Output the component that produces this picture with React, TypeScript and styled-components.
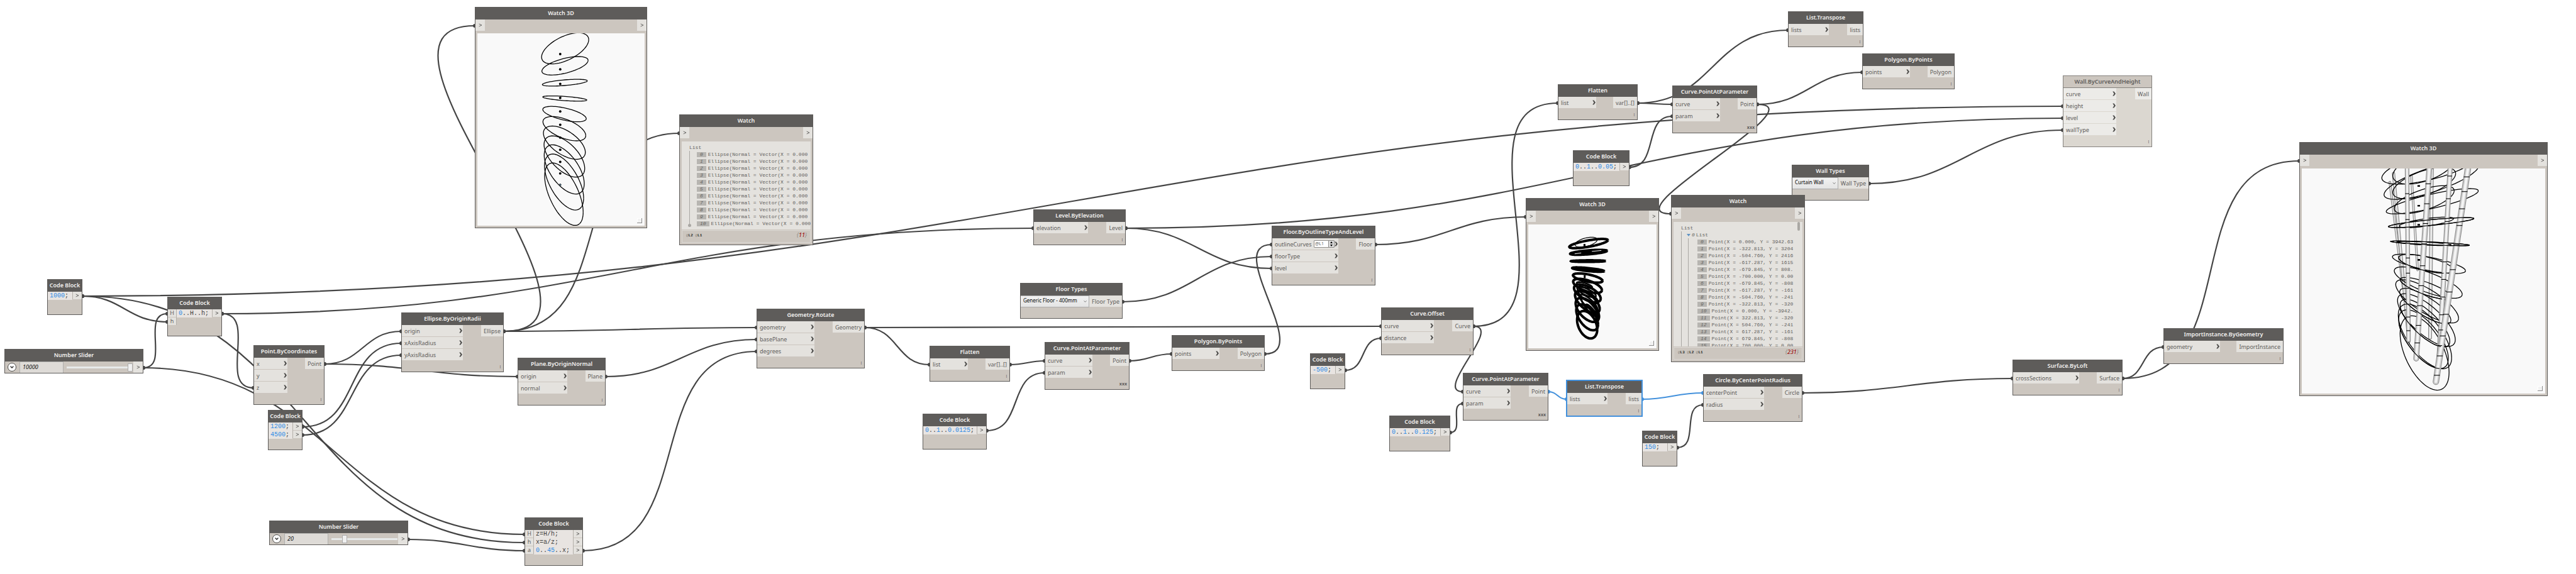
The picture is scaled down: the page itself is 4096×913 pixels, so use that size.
import React from "react";
import styled, { createGlobalStyle, css } from "styled-components";
import { ChevronDown } from "lucide-react";

/* ---------- theme ---------- */

const color = {
  ink: "#5e5c5a",
  body: "#ccc6bf",
  port: "#e4e2de",
  code: "#e8e4e1",
  rule: "#b3afa9",
  wire: "#444444",
  blue: "#4391dc",
  number: "#2e8be6",
};

const ui = `"Noto Sans", "Open Sans", sans-serif`;
const mono = `"Liberation Mono", monospace`;

/* The workspace is shown zoomed out; node data is in unzoomed units. */
const ZOOM = 0.7338;
const z = (v: number) => Math.round(v * ZOOM);

/* ---------- data ---------- */

type Kind = "function" | "code" | "slider" | "dropdown" | "watch" | "watch3d";

interface NodeData {
  id: string;
  kind: Kind;
  title: string;
  x: number;
  y: number;
  w: number;
  h?: number;
  ins?: string[];
  inW?: number;
  out?: string;
  lacing?: string;
  code?: string[];
  value?: string;
  percent?: number;
  tone?: "selected" | "frozen";
  level?: boolean;
  view?: "ellipses" | "rings" | "tower";
  list?: "ellipses" | "points";
}

const nodes: NodeData[] = [
  { id: "height", kind: "code", title: "Code Block", x: 102, y: 605, w: 76, code: ["1000;"] },
  { id: "range", kind: "code", title: "Code Block", x: 362, y: 643, w: 119, ins: ["H", "h"], code: ["0..H..h;"] },
  { id: "total", kind: "slider", title: "Number Slider", x: 10, y: 757, w: 301, value: "10000", percent: 100 },
  { id: "point", kind: "function", title: "Point.ByCoordinates", x: 549, y: 748, w: 154, ins: ["x", "y", "z"], inW: 73, out: "Point" },
  { id: "radii", kind: "code", title: "Code Block", x: 580, y: 888, w: 76, code: ["1200;", "4500;"] },
  { id: "ellipse", kind: "function", title: "Ellipse.ByOriginRadii", x: 870, y: 677, w: 222, ins: ["origin", "xAxisRadius", "yAxisRadius"], inW: 134, out: "Ellipse" },
  { id: "plane", kind: "function", title: "Plane.ByOriginNormal", x: 1122, y: 776, w: 190, ins: ["origin", "normal"], inW: 107, out: "Plane" },
  { id: "angle", kind: "slider", title: "Number Slider", x: 583, y: 1128, w: 301, value: "20", percent: 18 },
  { id: "steps", kind: "code", title: "Code Block", x: 1136, y: 1122, w: 127, ins: ["H", "h", "a"], code: ["z=H/h;", "x=a/z;", "0..45..x;"] },
  { id: "view1", kind: "watch3d", title: "Watch 3D", x: 1029, y: 15, w: 373, h: 480, view: "ellipses" },
  { id: "watch1", kind: "watch", title: "Watch", x: 1472, y: 248, w: 290, h: 284, list: "ellipses" },
  { id: "rotate", kind: "function", title: "Geometry.Rotate", x: 1640, y: 669, w: 234, ins: ["geometry", "basePlane", "degrees"], inW: 125, out: "Geometry" },
  { id: "flatten1", kind: "function", title: "Flatten", x: 2014, y: 749, w: 174, ins: ["list"], inW: 83, out: "var[]..[]" },
  { id: "param1", kind: "function", title: "Curve.PointAtParameter", x: 2263, y: 742, w: 185, ins: ["curve", "param"], inW: 104, out: "Point", lacing: "xxx" },
  { id: "code1", kind: "code", title: "Code Block", x: 1999, y: 897, w: 139, code: ["0..1..0.0125;"] },
  { id: "level", kind: "function", title: "Level.ByElevation", x: 2239, y: 454, w: 200, ins: ["elevation"], inW: 119, out: "Level" },
  { id: "floorTypes", kind: "dropdown", title: "Floor Types", x: 2211, y: 613, w: 222, value: "Generic Floor - 400mm", out: "Floor Type" },
  { id: "floor", kind: "function", title: "Floor.ByOutlineTypeAndLevel", x: 2755, y: 489, w: 226, ins: ["outlineCurves", "floorType", "level"], inW: 145, out: "Floor", level: true },
  { id: "polygon1", kind: "function", title: "Polygon.ByPoints", x: 2539, y: 727, w: 201, ins: ["points"], inW: 103, out: "Polygon" },
  { id: "code2", kind: "code", title: "Code Block", x: 2839, y: 766, w: 76, code: ["-500;"] },
  { id: "offset", kind: "function", title: "Curve.Offset", x: 2993, y: 667, w: 200, ins: ["curve", "distance"], inW: 115, out: "Curve" },
  { id: "param2", kind: "function", title: "Curve.PointAtParameter", x: 3170, y: 808, w: 185, ins: ["curve", "param"], inW: 104, out: "Point", lacing: "xxx" },
  { id: "code3", kind: "code", title: "Code Block", x: 3011, y: 901, w: 131, code: ["0..1..0.125;"] },
  { id: "transpose1", kind: "function", title: "List.Transpose", x: 3395, y: 825, w: 163, ins: ["lists"], inW: 89, out: "lists", tone: "selected" },
  { id: "circle", kind: "function", title: "Circle.ByCenterPointRadius", x: 3690, y: 811, w: 216, ins: ["centerPoint", "radius"], inW: 132, out: "Circle" },
  { id: "code4", kind: "code", title: "Code Block", x: 3558, y: 933, w: 76, code: ["150;"] },
  { id: "view2", kind: "watch3d", title: "Watch 3D", x: 3306, y: 429, w: 289, h: 331, view: "rings" },
  { id: "wallTypes", kind: "dropdown", title: "Wall Types", x: 3883, y: 357, w: 167, value: "Curtain Wall", out: "Wall Type" },
  { id: "watch2", kind: "watch", title: "Watch", x: 3621, y: 422, w: 290, h: 363, list: "points" },
  { id: "transpose2", kind: "function", title: "List.Transpose", x: 3875, y: 24, w: 163, ins: ["lists"], inW: 89, out: "lists" },
  { id: "flatten2", kind: "function", title: "Flatten", x: 3375, y: 182, w: 174, ins: ["list"], inW: 83, out: "var[]..[]" },
  { id: "param3", kind: "function", title: "Curve.PointAtParameter", x: 3623, y: 185, w: 185, ins: ["curve", "param"], inW: 104, out: "Point", lacing: "xxx" },
  { id: "code5", kind: "code", title: "Code Block", x: 3408, y: 326, w: 123, code: ["0..1..0.05;"] },
  { id: "polygon2", kind: "function", title: "Polygon.ByPoints", x: 4035, y: 116, w: 201, ins: ["points"], inW: 103, out: "Polygon" },
  { id: "wall", kind: "function", title: "Wall.ByCurveAndHeight", x: 4470, y: 164, w: 193, ins: ["curve", "height", "level", "wallType"], inW: 116, out: "Wall", tone: "frozen" },
  { id: "loft", kind: "function", title: "Surface.ByLoft", x: 4361, y: 780, w: 238, ins: ["crossSections"], inW: 144, out: "Surface" },
  { id: "import", kind: "function", title: "ImportInstance.ByGeometry", x: 4688, y: 711, w: 260, ins: ["geometry"], inW: 122, out: "ImportInstance" },
  { id: "view3", kind: "watch3d", title: "Watch 3D", x: 4982, y: 308, w: 538, h: 551, view: "tower" },
];

type Wire = [from: string, outIndex: number, to: string, inIndex: number, selected?: boolean];

const wires: Wire[] = [
  ["height", 0, "wall", 1],
  ["height", 0, "range", 1],
  ["height", 0, "steps", 1],
  ["range", 0, "level", 0],
  ["range", 0, "point", 2],
  ["total", 0, "range", 0],
  ["total", 0, "steps", 0],
  ["radii", 0, "ellipse", 1],
  ["radii", 1, "ellipse", 2],
  ["point", 0, "ellipse", 0],
  ["point", 0, "plane", 0],
  ["ellipse", 0, "view1", 0],
  ["ellipse", 0, "watch1", 0],
  ["ellipse", 0, "rotate", 0],
  ["plane", 0, "rotate", 1],
  ["steps", 2, "rotate", 2],
  ["angle", 0, "steps", 2],
  ["rotate", 0, "flatten1", 0],
  ["rotate", 0, "offset", 0],
  ["flatten1", 0, "param1", 0],
  ["code1", 0, "param1", 1],
  ["param1", 0, "polygon1", 0],
  ["polygon1", 0, "floor", 0],
  ["level", 0, "floor", 2],
  ["level", 0, "wall", 2],
  ["floorTypes", 0, "floor", 1],
  ["floor", 0, "view2", 0],
  ["code2", 0, "offset", 1],
  ["offset", 0, "flatten2", 0],
  ["offset", 0, "param2", 0],
  ["code3", 0, "param2", 1],
  ["param2", 0, "transpose1", 0, true],
  ["transpose1", 0, "circle", 0, true],
  ["code4", 0, "circle", 1],
  ["circle", 0, "loft", 0],
  ["loft", 0, "import", 0],
  ["loft", 0, "view3", 0],
  ["flatten2", 0, "param3", 0],
  ["flatten2", 0, "transpose2", 0],
  ["code5", 0, "param3", 1],
  ["param3", 0, "polygon2", 0],
  ["param3", 0, "watch2", 0],
  ["wallTypes", 0, "wall", 3],
];

/* ---------- wires ---------- */

const byId = Object.fromEntries(nodes.map((n) => [n.id, n]));

function portY(n: NodeData, index: number) {
  return n.kind === "code" ? z(n.y) + 27 + index * 13 : z(n.y) + 30 + index * 19;
}

const WireLayer = styled.svg`
  position: absolute;
  inset: 0;
  width: 100%;
  height: 100%;
  overflow: visible;
`;

function Wires() {
  return (
    <WireLayer aria-hidden="true">
      {wires.map(([from, out, to, into, selected], i) => {
        const a = byId[from];
        const b = byId[to];
        const x0 = z(a.x + a.w);
        const y0 = portY(a, out);
        const x1 = z(b.x);
        const y1 = portY(b, into);
        const reach = 0.45 * Math.hypot(x1 - x0, y1 - y0);
        const stroke = selected ? color.blue : color.wire;
        return (
          <g key={i} stroke={stroke} fill={stroke}>
            <path
              d={`M${x0} ${y0}C${x0 + reach} ${y0} ${x1 - reach} ${y1} ${x1} ${y1}`}
              fill="none"
              strokeWidth="2.2"
            />
            <circle cx={x0} cy={y0} r="3" stroke="none" />
            <circle cx={x1} cy={y1} r="3" stroke="none" />
          </g>
        );
      })}
    </WireLayer>
  );
}

/* ---------- node frame ---------- */

const GlobalStyle = createGlobalStyle`
  body { margin: 0; background: #fff; }
  *, *::before, *::after { box-sizing: border-box; }
  button, input, select { font: inherit; color: inherit; margin: 0; padding: 0; border: 0; border-radius: 0; background: none; }
`;

const Workspace = styled.main`
  position: relative;
  width: 100%;
  min-height: 100vh;
  overflow: hidden;
  background: #fff;
  font: 9px/18px ${ui};
  color: ${color.ink};
`;

const Frame = styled.section<{ $x: number; $y: number; $w: number; $h?: number; $tone?: string }>`
  position: absolute;
  left: ${(p) => p.$x}px;
  top: ${(p) => p.$y}px;
  width: ${(p) => p.$w}px;
  ${(p) => p.$h && `height: ${p.$h}px;`}
  display: flex;
  flex-direction: column;
  border: 1px solid ${color.ink};
  background: ${color.body};
  ${(p) =>
    p.$tone === "selected" &&
    css`
      border-color: ${color.blue};
      box-shadow: 0 0 0 1px ${color.blue};
    `}
  ${(p) =>
    p.$tone === "frozen" &&
    css`
      border-color: #85827e;
      background: #dbd7d0;
    `}
`;

const Title = styled.h2<{ $frozen?: boolean }>`
  margin: 0;
  height: 19px;
  flex: none;
  font-size: 9px;
  font-weight: 600;
  line-height: 17px;
  text-align: center;
  white-space: nowrap;
  color: ${(p) => (p.$frozen ? color.ink : "#f3f2f0")};
  background: ${(p) => (p.$frozen ? color.body : color.ink)};
  ${(p) => p.$frozen && "border-bottom: 1px solid #85827e;"}
`;

const Row = styled.div`
  display: flex;
  justify-content: space-between;
  align-items: flex-start;
`;

const Column = styled.div<{ $w?: number }>`
  display: flex;
  flex-direction: column;
  gap: 1px;
  ${(p) => p.$w && `width: ${p.$w}px;`}
`;

const Port = styled.div<{ $frozen?: boolean }>`
  display: flex;
  align-items: center;
  justify-content: space-between;
  height: 18px;
  padding: 0 4px;
  line-height: 17px;
  white-space: nowrap;
  background: ${(p) => (p.$frozen ? "#ecebe8" : color.port)};
`;

const InPort = styled(Port)`
  padding-right: 1px;
`;

const SymbolPort = styled(Port)`
  width: 15px;
  flex: none;
  justify-content: center;
`;

const Footer = styled.footer`
  display: flex;
  align-items: flex-end;
  justify-content: flex-end;
  height: 18px;
  padding: 0 3px 4px;
`;

const Lacing = styled.span<{ $bold?: boolean }>`
  font-size: ${(p) => (p.$bold ? 7 : 6)}px;
  font-weight: ${(p) => (p.$bold ? 700 : 600)};
  line-height: 8px;
`;

const Arrow = () => (
  <svg width="5" height="8" viewBox="0 0 5 8" aria-hidden="true">
    <path d="M0.2 0.4H2.4L5 4L2.4 7.6H0.2L2.6 4Z" fill="#4b4a48" />
  </svg>
);

const Caret = () => (
  <svg width="6" height="6" viewBox="0 0 6 6" aria-hidden="true">
    <path d="M0.7 1L5 3L0.7 5" fill="none" stroke={color.ink} strokeWidth="0.9" />
  </svg>
);

/* ---------- function nodes ---------- */

const Spinner = styled.span`
  display: flex;
  width: 33px;
  height: 12px;
  margin-left: auto;
  border: 1px solid #8e8c89;
  border-radius: 1px;
  background: #fff;
`;

const LevelInput = styled.input`
  && {
    width: 22px;
    padding: 0 1px;
    font: 7px/10px ${ui};
  }
`;

const StepButtons = styled.span`
  display: flex;
  flex-direction: column;
  width: 9px;
  border-left: 1px solid #8e8c89;
`;

const StepButton = styled.button`
  && {
    display: flex;
    align-items: center;
    justify-content: center;
    flex: 1;
    height: 5px;
    background: #dcdcdc;
  }
`;

function LevelSpinner() {
  return (
    <Spinner>
      <LevelInput defaultValue="@L1" aria-label="List level" />
      <StepButtons>
        <StepButton aria-label="Level up">
          <svg width="4" height="3" viewBox="0 0 4 3"><path d="M2 0L4 3H0Z" /></svg>
        </StepButton>
        <StepButton aria-label="Level down">
          <svg width="4" height="3" viewBox="0 0 4 3"><path d="M2 3L4 0H0Z" /></svg>
        </StepButton>
      </StepButtons>
    </Spinner>
  );
}

function FunctionBody({ n }: { n: NodeData }) {
  const frozen = n.tone === "frozen";
  return (
    <>
      <Row>
        <Column $w={z(n.inW || 0) - 1}>
          {(n.ins || []).map((name, i) => (
            <InPort key={name} $frozen={frozen}>
              {name}
              {n.level && i === 0 && <LevelSpinner />}
              <Arrow />
            </InPort>
          ))}
        </Column>
        <Port $frozen={frozen}>{n.out}</Port>
      </Row>
      <Footer>
        <Lacing $bold={n.lacing === "xxx"}>{n.lacing || "|"}</Lacing>
      </Footer>
    </>
  );
}

/* ---------- code blocks ---------- */

const CodeBody = styled.div`
  display: flex;
  align-items: flex-start;
  min-height: 19px;
  margin-bottom: 17px;
`;

const CodePorts = styled.div<{ $side: "in" | "out" }>`
  display: flex;
  flex-direction: column;
  gap: 1px;
  width: ${(p) => (p.$side === "in" ? 14 : 15)}px;
  ${(p) => (p.$side === "in" ? "border-right" : "border-left")}: 1px solid ${color.rule};
`;

const CodePort = styled.div`
  display: flex;
  align-items: center;
  justify-content: center;
  height: 12px;
  background: ${color.port};
`;

const CodeText = styled.code`
  flex: 1;
  padding-left: 3px;
  font: 10px/13px ${mono};
  white-space: pre;
  color: #3f3e3c;
  background: ${color.code};
`;

const NumberToken = styled.span`
  color: ${color.number};
`;

function CodeLine({ text }: { text: string }) {
  const parts = text.split(/(-?\d+(?:\.\d+)?)/);
  return (
    <div>
      {parts.map((p, i) => (i % 2 ? <NumberToken key={i}>{p}</NumberToken> : p))}
    </div>
  );
}

function CodeBlock({ n }: { n: NodeData }) {
  const lines = n.code || [];
  return (
    <CodeBody>
      {n.ins && (
        <CodePorts $side="in">
          {n.ins.map((name) => (
            <CodePort key={name}>{name}</CodePort>
          ))}
        </CodePorts>
      )}
      <CodeText>
        {lines.map((l) => (
          <CodeLine key={l} text={l} />
        ))}
      </CodeText>
      <CodePorts $side="out">
        {lines.map((l) => (
          <CodePort key={l}>
            <Caret />
          </CodePort>
        ))}
      </CodePorts>
    </CodeBody>
  );
}

/* ---------- sliders and drop-downs ---------- */

const SliderBody = styled.div`
  display: flex;
  align-items: center;
  height: 18px;
`;

const Expander = styled.button`
  && {
    display: flex;
    align-items: center;
    justify-content: center;
    width: 14px;
    height: 14px;
    margin: 0 5px 0 4px;
    flex: none;
    border: 1px solid #4b4a48;
    border-radius: 50%;
    background: #fff;
    color: #222;
  }
`;

const ValueInput = styled.input`
  && {
    width: 70px;
    height: 18px;
    flex: none;
    padding: 0 4px 2px;
    border: 1px solid #b0b0ae;
    border-bottom: 0;
    background: #dedbd7;
    color: #111;
    font: italic 9px/16px ${ui};
  }
`;

const Range = styled.input`
  && {
    appearance: none;
    flex: 1;
    min-width: 0;
    height: 12px;
    margin: 0 1px 0 5px;
  }
  &::-webkit-slider-runnable-track {
    height: 3px;
    background: #e7eaea;
  }
  &::-webkit-slider-thumb {
    appearance: none;
    width: 8px;
    height: 13px;
    margin-top: -5px;
    border: 1px solid #acacac;
    background: #f0f0f0;
  }
`;

function Slider({ n }: { n: NodeData }) {
  return (
    <SliderBody>
      <Expander aria-label="Range settings">
        <ChevronDown size={8} strokeWidth={4} />
      </Expander>
      <ValueInput defaultValue={n.value} aria-label="Value" />
      <Range type="range" min={0} max={100} defaultValue={n.percent} aria-label={n.title} />
      <SymbolPort>
        <Caret />
      </SymbolPort>
    </SliderBody>
  );
}

const Picker = styled.span`
  position: relative;
  display: flex;
  flex: 1;
  color: #666;
  svg {
    position: absolute;
    right: 3px;
    top: 6px;
    pointer-events: none;
  }
`;

const Select = styled.select`
  && {
    appearance: none;
    width: 100%;
    height: 19px;
    padding: 0 12px 3px 4px;
    border: 1px solid #acacac;
    border-left: 0;
    background: linear-gradient(#f2f2f2, #e4e4e4);
    color: #000;
    font: 8px/14px ${ui};
  }
`;

const PickerFooter = styled(Footer)`
  height: 17px;
`;

function Dropdown({ n }: { n: NodeData }) {
  return (
    <>
      <Row>
        <Picker>
          <Select aria-label={n.title}>
            <option>{n.value}</option>
          </Select>
          <ChevronDown size={7} strokeWidth={3} />
        </Picker>
        <Port>{n.out}</Port>
      </Row>
      <PickerFooter />
    </>
  );
}

/* ---------- watch lists ---------- */

const ListBox = styled.div`
  position: relative;
  flex: 1;
  min-height: 0;
  margin: 5px 3px 1px;
  padding: 4px 1px 0 12px;
  overflow: hidden;
  font: 8px/11px ${mono};
  white-space: pre;
  color: #65635f;
  background: ${color.port};
`;

const Branch = styled.ul<{ $indent: number }>`
  position: relative;
  margin: 0;
  padding: 0 0 0 ${(p) => p.$indent}px;
  list-style: none;
  border-left: 1px solid #a9a7a3;
`;

const SubBranch = styled.ul`
  margin: 0 0 0 10px;
  padding: 0 0 0 14px;
  list-style: none;
  border-left: 1px solid #a9a7a3;
`;

const BranchEnd = styled.i`
  position: absolute;
  left: 10px;
  bottom: 4px;
  width: 5px;
  height: 5px;
  border-radius: 50%;
  background: #a9a7a3;
`;

const Item = styled.li`
  display: flex;
  align-items: center;
  gap: 3px;
  height: 11px;
`;

const Index = styled.span`
  height: 8px;
  padding: 0 5px;
  flex: none;
  line-height: 8px;
  font-style: italic;
  background: #b7b5b1;
`;

const SubHead = styled.div`
  display: flex;
  align-items: center;
  gap: 2px;
  padding-left: 8px;
`;

const Clip = styled.div`
  margin-right: 12px;
  overflow: hidden;
`;

const ScrollThumb = styled.div`
  position: absolute;
  right: 4px;
  top: 0;
  width: 4px;
  height: 14px;
  border-radius: 2px;
  background: #aaa8a4;
`;

const Levels = styled.div`
  display: flex;
  align-items: center;
  justify-content: space-between;
  height: 20px;
  margin: 0 3px 3px;
  padding: 0 5px 2px 6px;
  flex: none;
  border: 1px solid #dbd8d4;
`;

const LevelNames = styled.span`
  font: 6px/8px ${mono};
  color: #8d8a86;
  b {
    color: #222;
  }
`;

const Count = styled.span`
  font-style: italic;
  color: #8d8a86;
  line-height: 12px;
  padding-bottom: 3px;
  b {
    font-weight: 500;
    color: #9c0f0f;
  }
`;

const points = [
  "Point(X = 0.000, Y = 3942.63",
  "Point(X = -322.813, Y = 3204",
  "Point(X = -504.760, Y = 2416",
  "Point(X = -617.287, Y = 1615",
  "Point(X = -679.845, Y = 808.",
  "Point(X = -700.000, Y = 0.00",
  "Point(X = -679.845, Y = -808",
  "Point(X = -617.287, Y = -161",
  "Point(X = -504.760, Y = -241",
  "Point(X = -322.813, Y = -320",
  "Point(X = 0.000, Y = -3942.",
  "Point(X = 322.813, Y = -320",
  "Point(X = 504.760, Y = -241",
  "Point(X = 617.287, Y = -161",
  "Point(X = 679.845, Y = -808",
  "Point(X = 700.000, Y = 0.00",
];

const ellipses = Array.from({ length: 11 }, () => "Ellipse(Normal = Vector(X = 0.000");

function Items({ values }: { values: string[] }) {
  return (
    <>
      {values.map((v, i) => (
        <Item key={i}>
          <Index>{i}</Index>
          <span>{v}</span>
        </Item>
      ))}
    </>
  );
}

function PortRow() {
  return (
    <Row>
      <SymbolPort>
        <Caret />
      </SymbolPort>
      <SymbolPort>
        <Caret />
      </SymbolPort>
    </Row>
  );
}

function PointList() {
  return (
    <>
      <Clip>
        <div>List</div>
        <Branch $indent={0}>
          <li>
            <SubHead>
              <svg width="6" height="4" viewBox="0 0 6 4" aria-hidden="true">
                <path d="M0 0H6L3 4Z" fill="#5f93c4" />
              </svg>
              <i>0</i>
              <span>List</span>
            </SubHead>
            <SubBranch>
              <Items values={points} />
            </SubBranch>
          </li>
        </Branch>
      </Clip>
      <ScrollThumb />
    </>
  );
}

function EllipseList() {
  return (
    <>
      <div>List</div>
      <Branch $indent={11}>
        <Items values={ellipses} />
      </Branch>
      <BranchEnd />
    </>
  );
}

function Watch({ n }: { n: NodeData }) {
  const isPoints = n.list === "points";
  const levels = isPoints ? ["L3", "L2", "L1"] : ["L2", "L1"];
  return (
    <>
      <PortRow />
      <ListBox>{isPoints ? <PointList /> : <EllipseList />}</ListBox>
      <Levels>
        <LevelNames>
          {levels.map((l) => (
            <React.Fragment key={l}>
              @<b>{l}</b>{" "}
            </React.Fragment>
          ))}
        </LevelNames>
        <Count>
          {"{"}
          <b>{isPoints ? 231 : 11}</b>
          {"}"}
        </Count>
      </Levels>
    </>
  );
}

/* ---------- 3D views ---------- */

/* A slanted ellipse: centre, half width and height, and shear between -1 and 1. */
type Oval = [cx: number, cy: number, w: number, h: number, shear: number];

function ovalPath([cx, cy, w, h, shear]: Oval, from = 0, to = 72) {
  const lag = Math.acos(shear);
  let d = "";
  for (let i = from; i <= to; i++) {
    const t = (i / 72) * Math.PI * 2;
    d += `${i === from ? "M" : "L"}${(cx + w * Math.cos(t)).toFixed(1)} ${(cy + h * Math.cos(t - lag)).toFixed(1)}`;
  }
  return d;
}

const Viewport = styled.div`
  position: relative;
  flex: 1;
  min-height: 0;
  margin: 4px 3px 3px;
  background: #f9f9f9;
  overflow: hidden;
`;

const Scene = styled.svg`
  display: block;
  width: 100%;
  height: 100%;
  path,
  line {
    vector-effect: non-scaling-stroke;
  }
`;

const Grip = styled.span`
  position: absolute;
  right: 4px;
  bottom: 4px;
  width: 8px;
  height: 8px;
  border: solid #8c8c8c;
  border-width: 0 1px 1px 0;
  background: #f2f2f2;
  box-shadow: inset 1px 1px 0 #ffffff;
`;

const stack: Oval[] = [
  [885, 317, 153, 101, -0.56],
  [884, 430, 150, 60, -0.58],
  [883, 540, 146, 22, -0.55],
  [883, 643, 143, 17, 0.6],
  [881, 744, 141, 50, 0.6],
  [880, 839, 139, 79, 0.57],
  [880, 930, 136, 108, 0.58],
  [880, 1020, 132, 134, 0.58],
  [879, 1104, 130, 160, 0.58],
  [878, 1186, 127, 182, 0.58],
  [877, 1265, 125, 203, 0.58],
];

const centres = [354, 453, 548, 639, 727, 814, 897, 976, 1055, 1130];

function EllipseScene() {
  return (
    <Scene viewBox="315 219 1086 1251" preserveAspectRatio="none" aria-label="Rotated ellipses">
      {stack.map((o, i) => (
        <path key={i} d={ovalPath(o)} fill="none" stroke="#000" strokeWidth="1.3" />
      ))}
      {centres.map((y) => (
        <circle key={y} cx="853" cy={y} r="8" />
      ))}
      <circle cx="853" cy="1204" r="6" fill="#5b7f96" stroke="#111" strokeWidth="3" />
    </Scene>
  );
}

const thick: Oval[] = [
  [386, 385, 94, 30, -0.72],
  [382, 609, 72, 30, 0.6],
  [381, 660, 70, 46, 0.6],
  [380, 708, 65, 58, 0.6],
  [380, 764, 60, 72, 0.62],
  [380, 816, 57, 78, 0.55],
  [379, 864, 53, 84, 0.55],
  [379, 912, 49, 89, 0.35],
];

const solid: Oval[] = [
  [386, 442, 90, 16, -0.6],
  [384, 499, 84, 5, -0.1],
  [384, 554, 78, 14, 0.72],
];

const knots: Oval[] = [
  [366, 655, 38, 20, 0.7],
  [376, 700, 46, 34, 0.75],
  [384, 730, 48, 44, 0.75],
  [386, 770, 44, 54, 0.8],
  [392, 800, 40, 60, 0.85],
  [402, 830, 30, 50, 0.85],
];

function RingScene() {
  return (
    <Scene viewBox="92 261 625 804" preserveAspectRatio="none" aria-label="Stacked floors">
      <path d={ovalPath([374, 376, 54, 32, -0.5])} fill="none" stroke="#000" strokeWidth="1.2" />
      {thick.map((o, i) => (
        <path key={i} d={ovalPath(o)} fill="none" stroke="#000" strokeWidth="4" />
      ))}
      {solid.map((o, i) => (
        <path key={i} d={ovalPath(o)} stroke="#000" strokeWidth="4" />
      ))}
      {knots.map((o, i) => (
        <path key={i} d={ovalPath(o)} fill="none" stroke="#000" strokeWidth="2.6" />
      ))}
      <path d="M318 452L350 446M402 436L448 430" stroke="#f9f9f9" strokeWidth="1" />
      <path d="M366 388V410M367 590V610M371 815V832" stroke="#000" strokeWidth="3" />
    </Scene>
  );
}

const floors: Oval[] = [
  [1170, 190, 134, 107, -0.66],
  [1172, 272, 130, 114, -0.76],
  [1174, 397, 126, 74, -0.82],
  [1171, 522, 117, 29, -0.82],
  [1168, 644, 108, 14, 0.8],
  [1165, 764, 100, 57, 0.72],
  [1163, 874, 93, 92, 0.75],
  [1160, 984, 86, 127, 0.78],
  [1158, 1094, 79, 155, 0.74],
  [1154, 1190, 73, 190, 0.66],
  [1153, 1287, 67, 218, 0.52],
];

const innerFloors: Oval[] = [
  [1150, 200, 84, 96, -0.5],
  [1152, 290, 86, 92, -0.6],
  [1152, 388, 82, 82, -0.64],
  [1158, 521, 74, 31, -0.7],
  [1152, 645, 74, 12, 0.7],
  [1157, 764, 75, 55, 0.66],
  [1156, 908, 70, 64, 0.8],
  [1155, 1012, 70, 104, 0.8],
  [1154, 1112, 68, 140, 0.76],
  [1150, 1206, 68, 172, 0.66],
];

type Tube = [x1: number, y1: number, x2: number, y2: number, width: number];

const backTubes: Tube[] = [
  [1058, 285, 1094, 900, 4],
  [1117, 250, 1134, 800, 4],
  [1068, 234, 1110, 1220, 5],
  [1173, 200, 1168, 1198, 6],
];

const frontTubes: Tube[] = [
  [1105, 200, 1109, 1212, 7],
  [1223, 200, 1192, 1338, 8],
  [1166, 200, 1130, 1320, 9],
  [1272, 200, 1184, 1456, 10],
];

function Tubes({ tubes }: { tubes: Tube[] }) {
  return (
    <>
      {tubes.map(([x1, y1, x2, y2, w], i) => (
        <g key={i} strokeLinecap="round">
          <line x1={x1} y1={y1} x2={x2} y2={y2} stroke="#8a8a8a" strokeWidth={w} />
          <line x1={x1} y1={y1} x2={x2} y2={y2} stroke="#c9c9c9" strokeWidth={w - 2} />
          <line x1={x1} y1={y1} x2={x2} y2={y2} stroke="#f4f4f4" strokeWidth={w / 2 - 1} />
        </g>
      ))}
    </>
  );
}

/* Short dark collars where a tube passes through a floor. */
function Collars() {
  return (
    <g stroke="#000" strokeWidth="1.1">
      {frontTubes.flatMap(([x1, y1, x2, y2, w], k) =>
        floors.map((f, i) => {
          const y = f[1] + (k - 1.5) * f[3] * 0.4;
          const x = x1 + ((x2 - x1) * (y - y1)) / (y2 - y1);
          return y > 215 && y < y2 - 20 ? (
            <path key={`${k}-${i}`} d={`M${x - w * 0.8} ${y}L${x + w * 0.8} ${y}`} />
          ) : null;
        })
      )}
    </g>
  );
}

function TowerScene() {
  return (
    <Scene viewBox="817 205 666 1320" preserveAspectRatio="none" aria-label="Tower structure">
      <Tubes tubes={backTubes} />
      <g fill="none" stroke="#000" strokeWidth="1.3">
        {floors.map((o, i) => (
          <path key={i} d={ovalPath(o)} />
        ))}
        {innerFloors.map((o, i) => (
          <path key={i} d={ovalPath(o)} />
        ))}
      </g>
      <Tubes tubes={frontTubes} />
      <g fill="none" stroke="#000" strokeWidth="1.2">
        {floors.slice(3, 5).map((o, i) => (
          <path key={i} d={ovalPath(o)} />
        ))}
        {innerFloors.slice(5).map((o, i) => (
          <path key={i} d={ovalPath(o, 10, 34)} />
        ))}
      </g>
      <Collars />
      <path d="M1137 303V312M1137 419V428M1137 530V540M1137 736V746" stroke="#000" strokeWidth="4" />
    </Scene>
  );
}

const scenes = { ellipses: EllipseScene, rings: RingScene, tower: TowerScene };

function Watch3D({ n }: { n: NodeData }) {
  const View = scenes[n.view || "ellipses"];
  return (
    <>
      <PortRow />
      <Viewport>
        <View />
        <Grip />
      </Viewport>
    </>
  );
}

/* ---------- app ---------- */

const bodies = {
  function: FunctionBody,
  code: CodeBlock,
  slider: Slider,
  dropdown: Dropdown,
  watch: Watch,
  watch3d: Watch3D,
};

function GraphNode({ n }: { n: NodeData }) {
  const Body = bodies[n.kind];
  return (
    <Frame $x={z(n.x)} $y={z(n.y)} $w={z(n.x + n.w) - z(n.x)} $h={n.h && z(n.h)} $tone={n.tone}>
      <Title $frozen={n.tone === "frozen"}>{n.title}</Title>
      <Body n={n} />
    </Frame>
  );
}

export default function App() {
  return (
    <>
      <GlobalStyle />
      <Workspace>
        <Wires />
        {nodes.map((n) => (
          <GraphNode key={n.id} n={n} />
        ))}
      </Workspace>
    </>
  );
}
